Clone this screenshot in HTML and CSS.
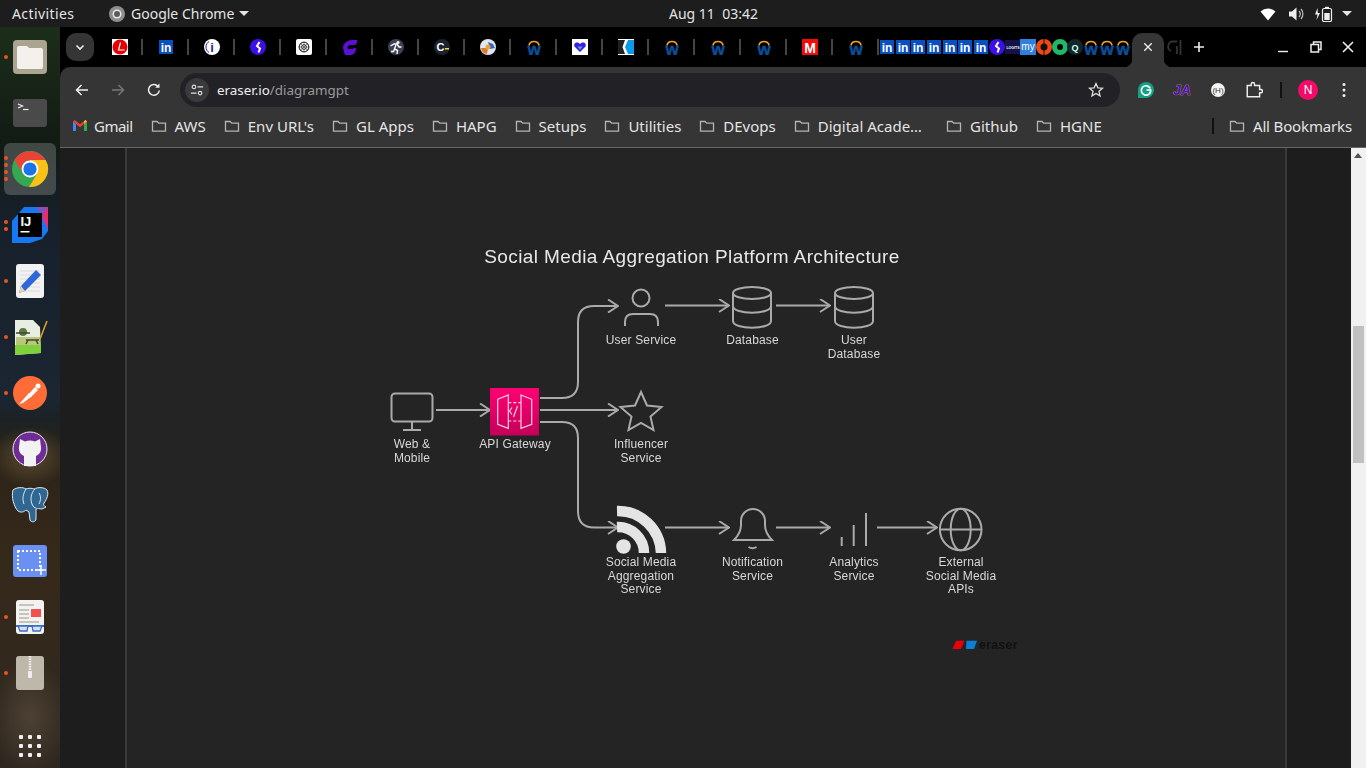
FILE: index.html
```html
<!DOCTYPE html>
<html lang="en">
<head>
    <meta charset="UTF-8">
    <meta name="viewport" content="width=device-width, initial-scale=1.0">
    <title>eraser.io/diagramgpt</title>
    <link rel="stylesheet" href="styles.css">
</head>
<body>
    <svg class="sprites">
        <symbol id="folder" viewBox="0 0 16 16"><path d="M1.5 3.5h4.6l1.6 1.6h6.8v8H1.500z" fill="none" stroke="#b4b4b4" stroke-width="1.3"/></symbol>
        <symbol id="workday" viewBox="0 0 16 16"><path d="M2.800 6.500a5.400 5.400 0 0 1 10.400 0" fill="none" stroke="#f5a623" stroke-width="1.500"/><text x="8" y="15.800" class="fav-w">w</text></symbol>
        <symbol id="linkedin" viewBox="0 0 16 16"><rect x="1" y="1" width="14" height="14" fill="#0a4fc0"/><text x="8" y="12.800" class="fav-in">in</text></symbol>
        <symbol id="kite" viewBox="0 0 16 16"><circle cx="8" cy="8" r="8" fill="#3a10e6"/><path d="M9.500 3 7 7l3 2.500-1.500 4" fill="none" stroke="#fff" stroke-width="2"/></symbol>
    </svg>

    <header class="topbar">
        <div class="top-left">
            <span class="activities">Activities</span>
            <svg class="app-icon" viewBox="0 0 16 16"><circle cx="8" cy="8" r="8" fill="#8e8e8e"/><circle cx="8" cy="8" r="4.500" fill="#e8e8e8"/><circle cx="8" cy="8" r="3" fill="#5b5b5b"/></svg>
            <span>Google Chrome</span>
            <i class="caret"></i>
        </div>
        <div class="clock">Aug 11&nbsp;&nbsp;03:42</div>
        <div class="status">
            <svg viewBox="0 0 20 16"><path d="M2.500 5.500a11 11 0 0 1 15 0L10 14.500z" fill="#fff"/></svg>
            <svg viewBox="0 0 20 16"><path d="M3 5.500h3l4.500-4v13L6 10.500H3z" fill="#eee"/><path d="M13 5a4.500 4.500 0 0 1 0 6M15 3a7.500 7.500 0 0 1 0 10" fill="none" stroke="#bbb" stroke-width="1.200"/></svg>
            <svg viewBox="0 0 20 16"><path d="M3.500 2 1 8.500h2.500L2.500 14 6 7H3.800z" fill="#eee"/><rect x="8.500" y="2.500" width="9" height="13" rx="1.500" fill="none" stroke="#eee" stroke-width="1.200"/><rect x="11" y="0.800" width="4" height="2" fill="#eee"/><rect x="10.300" y="7" width="5.400" height="7" fill="#eee"/></svg>
            <i class="caret status-caret"></i>
        </div>
    </header>

    <div class="desktop">
        <nav class="dock">
            <div class="dock-item">
                <i class="run run-one"></i>
                <svg viewBox="0 0 44 44"><rect x="5" y="5" width="34" height="34" rx="4" fill="#aaa491"/><path d="M9 13a2 2 0 0 1 2-2h8l2 2h12a2 2 0 0 1 2 2v17a2 2 0 0 1-2 2H11a2 2 0 0 1-2-2z" fill="#f4f1ec"/></svg>
            </div>
            <div class="dock-item">
                <svg viewBox="0 0 44 44"><rect x="5" y="8" width="34" height="28" rx="3" fill="#4a4a4a"/><path d="m10 13 4.500 2-4.500 2" fill="none" stroke="#eee" stroke-width="1.200"/><path d="M15 18.500h5.500" stroke="#eee" stroke-width="1.200"/></svg>
            </div>
            <div class="dock-item dock-active">
                <i class="run run-four"></i>
                <svg viewBox="0 0 44 44"><circle cx="22" cy="22" r="18" fill="#34a853"/><path d="M22 13.600h15.600A18 18 0 0 0 6.400 13l8.300 13.200A8.400 8.400 0 0 1 22 13.600z" fill="#ea4335"/><path d="M37.600 13H22v13.200l7.300 0L21 40a18 18 0 0 0 16.600-27z" fill="#fbc116"/><circle cx="22" cy="22" r="8.400" fill="#fff"/><circle cx="22" cy="22" r="6.600" fill="#1a73e8"/></svg>
            </div>
            <div class="dock-item">
                <i class="run run-two"></i>
                <svg viewBox="0 0 44 44"><path d="M16 4h24v24l-6 8-12 4H4V18z" fill="#1877f2"/><path d="M16 4h24v14L28 4z" fill="#8a4fb5"/><path d="M40 4v22l-6-12z" fill="#ee2a6b"/><rect x="10" y="10" width="24" height="24" fill="#000"/><text x="12.500" y="23" class="dock-ij">IJ</text><rect x="12.500" y="28" width="9" height="1.500" fill="#fff"/></svg>
            </div>
            <div class="dock-item">
                <i class="run run-one"></i>
                <svg viewBox="0 0 44 44"><rect x="8" y="5" width="28" height="34" rx="3" fill="#f2f2f2"/><path d="M12 12h20M12 16h20M12 20h20M12 24h20M12 28h20M12 32h20" stroke="#dcdcdc"/><path d="m28 11 5 5-16 16-6 2 2-7z" fill="#2f66d8"/><path d="m13 27 4 5-6 2z" fill="#e8d5a8"/></svg>
            </div>
            <div class="dock-item">
                <i class="run run-one"></i>
                <svg viewBox="0 0 44 44"><path d="M7 5h18l7 7 1 26-26 2z" fill="#e8eee2"/><path d="M7 30l26-1 0 9-26 2z" fill="#7fd03a"/><path d="M8 22h24v8H8z" fill="#b9c77a"/><circle cx="15" cy="17" r="4" fill="#5d7a45"/><path d="M8 18h14M18 25h13M20 25l-2 4M28 25l2 4" stroke="#3f4a2a" stroke-width="1.500"/><path d="m32 24 7-18" stroke="#d9a21b" stroke-width="1.600"/></svg>
            </div>
            <div class="dock-item">
                <i class="run run-one"></i>
                <svg viewBox="0 0 44 44"><circle cx="22" cy="22" r="17" fill="#ff6c37"/><path d="m11 33 2-2 8-9 3 3-9 7z" fill="#fff"/><path d="m19 25 8-9 3 3-8 8z" fill="#fff"/><circle cx="30" cy="15" r="2.500" fill="#fff"/></svg>
            </div>
            <div class="dock-item">
                <svg viewBox="0 0 44 44"><circle cx="22" cy="22" r="17" fill="#6e2c96" stroke="#eee" stroke-width="1"/><path d="M12 12l5 2.500a13 13 0 0 1 10 0l5-2.500.7 6c1 4 .3 9-4.700 11v10H16V29c-5-2-5.700-7-4.700-11z" fill="#f2f2f2"/></svg>
            </div>
            <div class="dock-item">
                <svg viewBox="0 0 44 44"><path d="M5 7c4-3 10-3 13-1 2-1 6-1 8 0 4-2 10-2 13 1 2 4 0 9-3 13-1 2 0 3 2 4l-4 2c-3 0-4-1-6 0v10c0 3-5 4-6 1l-1-8-3-2c-2 2-5 3-8 1C6 24 3 14 5 7z" fill="#2f6792" stroke="#dfe8ef" stroke-width="1"/><path d="M18 6c-3 5-4 10-2 15M27 6c-4 4-5 10-3 15 1 3 3 4 4 4M31 10c2 3 2 7 0 11" fill="none" stroke="#dfe8ef"/></svg>
            </div>
            <div class="dock-item">
                <svg viewBox="0 0 44 44"><rect x="5" y="6" width="34" height="32" rx="3" fill="#6a90f4"/><rect x="10" y="12" width="22" height="19" fill="none" stroke="#fff" stroke-width="2" stroke-dasharray="2 2"/><path d="M33 26v10M28 31h10" stroke="#fff" stroke-width="1.500"/></svg>
            </div>
            <div class="dock-item">
                <i class="run run-one"></i>
                <svg viewBox="0 0 44 44"><rect x="8" y="5" width="28" height="34" rx="3" fill="#f2f2f2"/><path d="M11 10h15M11 15h10M11 19h10M11 23h10M11 27h20" stroke="#b9b6a8" stroke-width="1.300"/><rect x="23" y="14" width="10" height="8" fill="#ef5350"/><rect x="8" y="30" width="28" height="2" fill="#3870c6"/><path d="M10 31h10l-1 5h-7zM24 31h10l-2 5h-7z" fill="#dde" stroke="#3870c6" stroke-width="1.300"/></svg>
            </div>
            <div class="dock-item">
                <i class="run run-one"></i>
                <svg viewBox="0 0 44 44"><rect x="8" y="5" width="28" height="34" rx="3" fill="#bdb8a9"/><path d="M22 5v16" stroke="#f2f2f2" stroke-width="2.500" stroke-dasharray="1.500 1"/><rect x="20" y="20" width="4" height="7" rx="1" fill="#eee"/></svg>
            </div>
            <div class="dock-apps">
                <i></i><i></i><i></i><i></i><i></i><i></i><i></i><i></i><i></i>
            </div>
        </nav>

        <main class="chrome">
            <div class="tabstrip">
                <button class="tab-search"><svg viewBox="0 0 12 12"><path d="m2.500 4.500 3.500 3.500 3.500-3.500" fill="none" stroke="#eee" stroke-width="1.600"/></svg></button>
                <div class="tab"><svg class="fav" viewBox="0 0 16 16"><rect width="16" height="16" fill="#fff"/><circle cx="8" cy="8" r="7.500" fill="#e60000"/><path d="M8.500 3.500 6.500 11h6" fill="none" stroke="#fff" stroke-width="1.200"/></svg></div>
                <div class="tab"><svg class="fav"><use href="#linkedin"/></svg></div>
                <div class="tab"><svg class="fav" viewBox="0 0 16 16"><circle cx="8" cy="8" r="8" fill="#fff"/><path d="M5 2.500a6.500 6.500 0 0 0 0 11" fill="none" stroke="#1a2fa0"/><text x="8" y="13" class="fav-i">i</text></svg></div>
                <div class="tab"><svg class="fav"><use href="#kite"/></svg></div>
                <div class="tab"><svg class="fav" viewBox="0 0 16 16"><rect width="16" height="16" rx="2" fill="#fff"/><circle cx="8" cy="8" r="4.800" fill="none" stroke="#333" stroke-width="1.200"/><circle cx="8" cy="8" r="2.400" fill="none" stroke="#333"/><path d="M4 4l8 8M12 4l-8 8M8 2.500v11M2.500 8h11" stroke="#333" stroke-width=".5"/></svg></div>
                <div class="tab"><svg class="fav" viewBox="0 0 16 16"><path d="M3 16 1 9c0-5 5-8 9-8h5c0 4-1 5-3 5H9C6 6 5 8 6 10h5l1-1h2c0 4-2 7-5 7z" fill="#5c0fd6"/></svg></div>
                <div class="tab"><svg class="fav" viewBox="0 0 16 16"><circle cx="8" cy="8" r="8" fill="#3c4155"/><circle cx="10" cy="3.500" r="1.500" fill="#fff"/><path d="M2.500 7 6 5h3l2 3h2.500M8 6 6.500 10l3 1.500-.5 3.500M6.500 10l-1 2.500-2.500 0" fill="none" stroke="#fff" stroke-width="1.400"/></svg></div>
                <div class="tab"><svg class="fav" viewBox="0 0 16 16"><circle cx="8" cy="8" r="8" fill="#1b2230"/><text x="2.500" y="12" class="fav-c">C</text><rect x="11" y="9" width="4" height="1.500" fill="#f2e230"/></svg></div>
                <div class="tab"><svg class="fav" viewBox="0 0 16 16"><circle cx="8" cy="8" r="8" fill="#dfe6f2"/><path d="M1 9a7 7 0 0 0 6 6l1-6z" fill="#e07a20"/><path d="M8 3l5 2 2 4-5 1z" fill="#3a66b8"/><circle cx="8" cy="8" r="2.500" fill="#e8a33c"/></svg></div>
                <div class="tab"><svg class="fav"><use href="#workday"/></svg></div>
                <div class="tab"><svg class="fav" viewBox="0 0 16 16"><rect width="16" height="16" fill="#fff"/><path d="M8 13 2.500 7.500C1.500 5.500 3 3.500 5 3.500c1.300 0 2.300.6 3 1.500.7-.9 1.700-1.500 3-1.500 2 0 3.500 2 2.500 4z" fill="#3d1ce0"/><path d="M8 11 5.500 7.500h5z" fill="#38a8f0"/></svg></div>
                <div class="tab"><svg class="fav" viewBox="0 0 16 16"><rect width="16" height="16" fill="#fff"/><path d="M0 1h7L4.500 8 7 15H0z" fill="#231f20"/><path d="M16 1h-6L7 8l3 7h6z" fill="#0a9be8"/></svg></div>
                <div class="tab"><svg class="fav"><use href="#workday"/></svg></div>
                <div class="tab"><svg class="fav"><use href="#workday"/></svg></div>
                <div class="tab"><svg class="fav"><use href="#workday"/></svg></div>
                <div class="tab"><svg class="fav" viewBox="0 0 16 16"><rect width="16" height="16" fill="#f50a0a"/><text x="8" y="14" class="fav-m">M</text></svg></div>
                <div class="tab"><svg class="fav"><use href="#workday"/></svg></div>

                <div class="tab-mini"><svg class="fav"><use href="#linkedin"/></svg></div>
                <div class="tab-mini"><svg class="fav"><use href="#linkedin"/></svg></div>
                <div class="tab-mini"><svg class="fav"><use href="#linkedin"/></svg></div>
                <div class="tab-mini"><svg class="fav"><use href="#linkedin"/></svg></div>
                <div class="tab-mini"><svg class="fav"><use href="#linkedin"/></svg></div>
                <div class="tab-mini"><svg class="fav"><use href="#linkedin"/></svg></div>
                <div class="tab-mini"><svg class="fav"><use href="#linkedin"/></svg></div>
                <div class="tab-mini"><svg class="fav"><use href="#kite"/></svg></div>
                <div class="tab-mini"><svg class="fav" viewBox="0 0 16 16"><rect y="1" width="16" height="14" fill="#15124a"/><text x="8" y="9.500" class="fav-tiny">LOGITS</text></svg></div>
                <div class="tab-mini"><svg class="fav" viewBox="0 0 16 16"><rect width="16" height="16" fill="#2f7fdc"/><text x="8" y="11" class="fav-my">my</text></svg></div>
                <div class="tab-mini"><svg class="fav" viewBox="0 0 16 16"><circle cx="8" cy="8" r="8" fill="#ef4a12"/><circle cx="8" cy="8" r="3.500" fill="#111"/><path d="M8 0v16" stroke="#111"/></svg></div>
                <div class="tab-mini"><svg class="fav" viewBox="0 0 16 16"><circle cx="8" cy="8" r="5.500" fill="none" stroke="#1fb866" stroke-width="5"/></svg></div>
                <div class="tab-mini"><svg class="fav" viewBox="0 0 16 16"><circle cx="8" cy="8" r="8" fill="#12262c"/><text x="8" y="11.500" class="fav-q">Q</text></svg></div>
                <div class="tab-mini"><svg class="fav"><use href="#workday"/></svg></div>
                <div class="tab-mini"><svg class="fav"><use href="#workday"/></svg></div>
                <div class="tab-mini"><svg class="fav"><use href="#workday"/></svg></div>

                <div class="tab-active"><svg viewBox="0 0 12 12"><path d="m1.500 1.500 9 9m0-9-9 9" stroke="#eee" stroke-width="1.600"/></svg></div>
                <div class="tab-ghost"><svg viewBox="0 0 16 16"><path d="M11 2.500H7a5 5 0 0 0-2 9.500M11 7v8M14.500 1v15" fill="none" stroke="#333" stroke-width="1.800"/></svg></div>
                <button class="new-tab"><svg viewBox="0 0 12 12"><path d="M6 1v10M1 6h10" stroke="#eee" stroke-width="1.600"/></svg></button>
                <div class="window-controls">
                    <svg viewBox="0 0 12 12"><path d="M1 10.500h10" stroke="#eee" stroke-width="1.400"/></svg>
                    <svg viewBox="0 0 12 12"><path d="M3.500 3V1h7.500v7.500H9" fill="none" stroke="#eee" stroke-width="1.500"/><rect x="1" y="3.500" width="7.500" height="7.500" fill="none" stroke="#eee" stroke-width="1.500"/></svg>
                    <svg viewBox="0 0 12 12"><path d="m1 1 10 10m0-10L1 11" stroke="#eee" stroke-width="1.600"/></svg>
                </div>
            </div>

            <div class="toolbar">
                <button class="tool"><svg viewBox="0 0 16 16"><path d="M14 8H3m4.500-5L2.500 8l5 5" fill="none" stroke="#eee" stroke-width="1.500"/></svg></button>
                <button class="tool"><svg viewBox="0 0 16 16"><path d="M2 8h11M8.500 3l5 5-5 5" fill="none" stroke="#777" stroke-width="1.500"/></svg></button>
                <button class="tool"><svg viewBox="0 0 16 16"><path d="M13.300 8.500A5.400 5.400 0 1 1 12 4.300" fill="none" stroke="#eee" stroke-width="1.500"/><path d="M13.500 1.500v4.300H9.200z" fill="#eee"/></svg></button>
                <div class="omnibox">
                    <span class="site-info"><svg viewBox="0 0 16 16"><circle cx="4.500" cy="4.500" r="2" fill="none" stroke="#ddd" stroke-width="1.300"/><path d="M8.500 4.500H15M1 11.500h6.500" stroke="#ddd" stroke-width="1.300"/><circle cx="11.500" cy="11.500" r="2" fill="none" stroke="#ddd" stroke-width="1.300"/></svg></span>
                    <span class="url">eraser.io<span class="url-path">/diagramgpt</span></span>
                    <svg class="star" viewBox="0 0 16 16"><path d="m8 1.500 1.900 4.300 4.600.4-3.500 3 1 4.600L8 11.400l-4 2.400 1-4.600-3.500-3 4.600-.4z" fill="none" stroke="#ddd" stroke-width="1.300"/></svg>
                </div>
                <button class="tool"><svg viewBox="0 0 16 16"><path d="M8 0a8 8 0 0 1 0 16H0V8a8 8 0 0 1 8-8z" fill="#15a085"/><path d="M12.300 6.500A4.700 4.700 0 1 0 12.700 8H8.500" fill="none" stroke="#fff" stroke-width="1.700"/></svg></button>
                <button class="tool"><span class="ext-ja">JA</span></button>
                <button class="tool"><svg viewBox="0 0 16 16"><circle cx="8" cy="8" r="7" fill="#f4f4f4"/><text x="8" y="11" class="ext-h">(H)</text></svg></button>
                <button class="tool"><svg class="puzzle" viewBox="0 0 16 16"><path d="M2 4h3.500V2.800a1.500 1.500 0 0 1 3 0V4H13v3.500h1a1.500 1.500 0 0 1 0 3h-1V14H2z" fill="none" stroke="#eee" stroke-width="1.300"/></svg></button>
                <span class="tool-sep"></span>
                <button class="tool"><span class="avatar">N</span></button>
                <button class="tool"><svg viewBox="0 0 16 16"><circle cx="8" cy="2.500" r="1.500" fill="#eee"/><circle cx="8" cy="8" r="1.500" fill="#eee"/><circle cx="8" cy="13.500" r="1.500" fill="#eee"/></svg></button>
            </div>

            <div class="bookmarks">
                <span class="bookmark bookmark-gmail">
                    <svg viewBox="0 0 14 16"><path d="M0 3.500V13h3V6z" fill="#4285f4"/><path d="M14 3.500V13h-3V6z" fill="#34a853"/><path d="M0 3.500 1.500 2 7 6.300 12.500 2 14 3.500 11 6 7 9.300 3 6z" fill="#ea4335"/><path d="M11 6l3-2.500L12.500 2 11 3.200z" fill="#fbbc04"/></svg>
                    Gmail
                </span>
                <span class="bookmark"><svg><use href="#folder"/></svg>AWS</span>
                <span class="bookmark"><svg><use href="#folder"/></svg>Env URL's</span>
                <span class="bookmark"><svg><use href="#folder"/></svg>GL Apps</span>
                <span class="bookmark"><svg><use href="#folder"/></svg>HAPG</span>
                <span class="bookmark"><svg><use href="#folder"/></svg>Setups</span>
                <span class="bookmark"><svg><use href="#folder"/></svg>Utilities</span>
                <span class="bookmark"><svg><use href="#folder"/></svg>DEvops</span>
                <span class="bookmark bookmark-long"><svg><use href="#folder"/></svg>Digital Acade…</span>
                <span class="bookmark"><svg><use href="#folder"/></svg>Github</span>
                <span class="bookmark"><svg><use href="#folder"/></svg>HGNE</span>
                <span class="bookmark-sep"></span>
                <span class="bookmark"><svg><use href="#folder"/></svg>All Bookmarks</span>
            </div>

            <div class="viewport">
                <div class="page-panel">
                    <svg class="diagram" viewBox="127 148 1158 620">
                        <defs>
                            <linearGradient id="gateway" x1="0" y1="0" x2="0" y2="1">
                                <stop offset="0" stop-color="#ff0073"/>
                                <stop offset="1" stop-color="#c4005a"/>
                            </linearGradient>
                            <marker id="head" viewBox="0 0 12 14" refX="11" refY="7" markerWidth="12" markerHeight="14" markerUnits="userSpaceOnUse" orient="auto">
                                <path d="M1 .5 11 7 1 13.500" fill="none" stroke="#aaa" stroke-width="2"/>
                            </marker>
                        </defs>

                        <text x="692" y="263" class="title">Social Media Aggregation Platform Architecture</text>

                        <!-- links -->
                        <g class="link">
                            <path d="M436 410H490" marker-end="url(#head)"/>
                            <path d="M540 398H562Q578 398 578 382V322Q578 306 594 306H618" marker-end="url(#head)"/>
                            <path d="M540 410H618" marker-end="url(#head)"/>
                            <path d="M540 422H562Q578 422 578 438V511Q578 527.500 594 527.500H618" marker-end="url(#head)"/>
                            <path d="M665 305.500H729" marker-end="url(#head)"/>
                            <path d="M776 305.500H830" marker-end="url(#head)"/>
                            <path d="M665 527.500H729" marker-end="url(#head)"/>
                            <path d="M776 527.500H830" marker-end="url(#head)"/>
                            <path d="M877 527.500H937" marker-end="url(#head)"/>
                        </g>

                        <!-- web & mobile -->
                        <g class="shape">
                            <rect x="391.500" y="393.500" width="41" height="28" rx="3.500"/>
                            <path d="M412 422v8M403 430h18"/>
                        </g>
                        <text class="label" x="412" y="448">Web &amp;</text>
                        <text class="label" x="412" y="461.500">Mobile</text>

                        <!-- api gateway -->
                        <rect x="490" y="388" width="49" height="47.500" fill="url(#gateway)"/>
                        <g class="gateway-icon">
                            <path d="M497.700 399.300 508.300 395V428.300L497.700 424.300z"/>
                            <path d="M521 395 531.700 399.300V424.300L521 428.300z"/>
                            <path d="M508.300 402.700H521M508.300 421H521" stroke-dasharray="3 2"/>
                            <path d="M512 407.500 509.500 411 512 414.500M517.500 406 513.500 417"/>
                        </g>
                        <text class="label" x="515" y="448">API Gateway</text>

                        <!-- user service -->
                        <g class="shape">
                            <circle cx="641" cy="298" r="8.500"/>
                            <path d="M625 326V322Q625 314 633 314H650Q658 314 658 322V326"/>
                        </g>
                        <text class="label" x="641" y="344">User Service</text>

                        <!-- databases -->
                        <g class="shape">
                            <ellipse cx="752" cy="293" rx="19" ry="6"/>
                            <path d="M733 293V321C733 330 771 330 771 321V293M733 306C733 315 771 315 771 306"/>
                            <ellipse cx="854" cy="293" rx="19" ry="6"/>
                            <path d="M835 293V321C835 330 873 330 873 321V293M835 306C835 315 873 315 873 306"/>
                        </g>
                        <text class="label" x="752.500" y="344">Database</text>
                        <text class="label" x="854" y="344">User</text>
                        <text class="label" x="854" y="357.500">Database</text>

                        <!-- influencer -->
                        <path class="shape" d="M641 392 647 405.500 661.500 407 650.500 416.500 653.500 430 641 423 628.500 430 631.500 416.500 620.500 407 635 405.500z"/>
                        <text class="label" x="641" y="448">Influencer</text>
                        <text class="label" x="641" y="461.500">Service</text>

                        <!-- aggregation -->
                        <circle cx="623.500" cy="546.500" r="7.300" fill="#e4e4e4"/>
                        <path class="rss" d="M617 527A26 26 0 0 1 644 553"/>
                        <path class="rss" d="M617 511A43 43 0 0 1 661 553"/>
                        <text class="label" x="641" y="566">Social Media</text>
                        <text class="label" x="641" y="579.500">Aggregation</text>
                        <text class="label" x="641" y="593">Service</text>

                        <!-- notification -->
                        <g class="shape">
                            <path d="M734 540Q741 533 741 525V521A12 12 0 0 1 765 521V525Q765 533 772 540z"/>
                            <path d="M748.500 547Q752.500 549.500 756.500 547"/>
                        </g>
                        <text class="label" x="752.500" y="566">Notification</text>
                        <text class="label" x="752.500" y="579.500">Service</text>

                        <!-- analytics -->
                        <path class="shape" d="M841.700 537V546M853.700 525V546M866 513V546"/>
                        <text class="label" x="854" y="566">Analytics</text>
                        <text class="label" x="854" y="579.500">Service</text>

                        <!-- external apis -->
                        <g class="shape">
                            <circle cx="960.700" cy="529.500" r="20.800"/>
                            <ellipse cx="960.700" cy="529.500" rx="10" ry="20.800"/>
                            <path d="M940 529.500H981.500"/>
                        </g>
                        <text class="label" x="961" y="566">External</text>
                        <text class="label" x="961" y="579.500">Social Media</text>
                        <text class="label" x="961" y="593">APIs</text>

                        <!-- watermark -->
                        <path d="M956 640.700H964.500L961 649H952.500z" fill="#e8000b"/>
                        <path d="M966.500 640.700H977L974 649H966z" fill="#0b7fd6"/>
                        <text class="watermark" x="979" y="648.500">eraser</text>
                    </svg>
                </div>
                <div class="scrollbar">
                    <i class="scroll-up"></i>
                    <i class="scroll-thumb"></i>
                </div>
            </div>
        </main>
    </div>
</body>
</html>
```

FILE: styles.css
```css
* {
    box-sizing: border-box;
}
body {
    margin: 0;
    height: 768px;
    overflow: hidden;
    background-color: #1d1d1d;
    font-family: 'Noto Sans', sans-serif;
    font-size: 14px;
    color: #e4e4e4;
}
button {
    padding: 0;
    border: none;
    background: none;
}
.sprites {
    display: none;
}

/* gnome top bar */
.topbar {
    display: flex;
    align-items: center;
    height: 27px;
    background-color: #1d1d1d;
}
.top-left {
    display: flex;
    align-items: center;
    width: 669px;
    padding-left: 12px;
}
.activities {
    width: 97px;
    letter-spacing: 0.4px;
}
.app-icon {
    width: 16px;
    height: 16px;
    margin-right: 6px;
}
.caret {
    display: block;
    width: 0;
    height: 0;
    margin-left: 5px;
    border-left: 5px solid transparent;
    border-right: 5px solid transparent;
    border-top: 5px solid #e4e4e4;
}
.status {
    display: flex;
    align-items: center;
    gap: 8px;
    margin-left: auto;
    padding-right: 14px;
}
.status svg {
    width: 20px;
    height: 16px;
}
.status-caret {
    margin-left: 0;
}

.desktop {
    display: flex;
    height: 741px;
}

/* dock */
.dock {
    display: flex;
    flex-direction: column;
    flex: none;
    width: 60px;
    padding-top: 2px;
    background:
        radial-gradient(ellipse 40px 30px at 30px 430px, #5a4a30 0%, transparent 100%),
        radial-gradient(ellipse 40px 60px at 30px 690px, #4d4134 0%, transparent 100%),
        linear-gradient(180deg, #1c2e1a 0%, #121a14 16%, #17202a 26%, #1a2632 50%, #1c2224 53%, #2c2318 58%, #35291a 72%, #2e271f 100%);
}
.dock-item {
    position: relative;
    display: flex;
    align-items: center;
    justify-content: center;
    flex: none;
    height: 56px;
}
.dock-item svg {
    width: 44px;
    height: 44px;
}
.dock-ij {
    font-family: 'Liberation Sans', sans-serif;
    font-size: 13px;
    font-weight: bold;
    fill: #fff;
}
.dock-active::before {
    content: "";
    position: absolute;
    top: 2px;
    left: 4px;
    width: 52px;
    height: 52px;
    border-radius: 6px;
    background-color: rgba(255, 255, 255, 0.2);
}
.dock-active svg {
    position: relative;
}
.run {
    position: absolute;
    left: 4px;
    top: 26px;
    width: 4px;
    height: 4px;
    border-radius: 50%;
    background-color: #e95420;
    color: #e95420;
}
.run-two {
    top: 22.500px;
    box-shadow: 0 7px 0 currentColor;
}
.run-four {
    top: 15px;
    box-shadow: 0 7px 0 currentColor, 0 14px 0 currentColor, 0 21px 0 currentColor;
}
.dock-apps {
    display: grid;
    grid-template-columns: repeat(3, 4px);
    gap: 5px;
    margin: 34px 0 0 19px;
}
.dock-apps i {
    height: 4px;
    border-radius: 1px;
    background-color: #f2f2f2;
}

/* chrome window */
.chrome {
    display: flex;
    flex-direction: column;
    flex: 1;
    min-width: 0;
    background-color: #000;
}
.tabstrip {
    display: flex;
    align-items: center;
    flex: none;
    height: 40px;
    padding-left: 6px;
    background-color: #000;
}
.tab-search {
    display: flex;
    align-items: center;
    justify-content: center;
    flex: none;
    width: 28px;
    height: 28px;
    margin-right: 3px;
    border-radius: 10px;
    background-color: #353535;
}
.tab-search svg {
    width: 12px;
    height: 12px;
}
.tab {
    display: flex;
    align-items: center;
    justify-content: center;
    flex: none;
    width: 46px;
    height: 16px;
    border-right: 2px solid #444;
    padding-left: 2px;
}
.tab-mini {
    display: flex;
    align-items: center;
    justify-content: center;
    flex: none;
    width: 15.730px;
    height: 16px;
}
.tab-mini .fav {
    flex: none;
}
.fav {
    width: 16px;
    height: 16px;
}
.fav-in, .fav-w, .fav-m, .fav-i, .fav-my, .fav-q, .fav-tiny {
    font-family: 'Liberation Sans', sans-serif;
    font-weight: bold;
    text-anchor: middle;
}
.fav-in {
    font-size: 12px;
    fill: #fff;
}
.fav-w {
    font-size: 17px;
    fill: #07509c;
    stroke: #07509c;
    stroke-width: 0.4px;
}
.fav-m {
    font-size: 14px;
    fill: #fff;
}
.fav-i {
    font-size: 13px;
    fill: #1a2fa0;
}
.fav-c {
    font-family: 'Liberation Sans', sans-serif;
    font-weight: bold;
    font-size: 11px;
    fill: #fff;
}
.fav-my {
    font-size: 10px;
    font-weight: normal;
    fill: #fff;
}
.fav-q {
    font-size: 9px;
    fill: #cfe;
}
.fav-tiny {
    font-size: 3.500px;
    fill: #fff;
}
.tab-active {
    position: relative;
    display: flex;
    align-items: center;
    justify-content: center;
    flex: none;
    align-self: flex-end;
    width: 32px;
    height: 34px;
    margin-left: 1.300px;
    border-radius: 10px 10px 0 0;
    background-color: #353535;
}
.tab-active svg {
    width: 10px;
    height: 10px;
    margin-bottom: 6px;
}
.tab-active::before, .tab-active::after {
    content: "";
    position: absolute;
    bottom: 0;
    width: 8px;
    height: 8px;
}
.tab-active::before {
    left: -8px;
    background: radial-gradient(circle at 0 0, #000 8px, #353535 8.500px);
}
.tab-active::after {
    right: -8px;
    background: radial-gradient(circle at 100% 0, #000 8px, #353535 8.500px);
}
.tab-ghost {
    flex: none;
    width: 16px;
    height: 16px;
    margin-left: 2px;
}
.new-tab {
    display: flex;
    flex: none;
    width: 12px;
    height: 12px;
    margin-left: 11px;
}
.window-controls {
    display: flex;
    align-items: center;
    gap: 20.500px;
    margin-left: auto;
    padding-right: 12px;
}
.window-controls svg {
    width: 12px;
    height: 12px;
}

/* toolbar */
.toolbar {
    display: flex;
    flex: none;
    height: 40px;
    padding: 6px 0 0 4px;
    border-radius: 10px 0 0 0;
    background-color: #353535;
}
.tool {
    display: flex;
    align-items: center;
    justify-content: center;
    flex: none;
    width: 36px;
    height: 34px;
}
.tool svg {
    width: 16px;
    height: 16px;
}
.tool .puzzle {
    width: 18px;
    height: 18px;
}
.omnibox {
    display: flex;
    align-items: center;
    flex: none;
    width: 940px;
    height: 34px;
    margin: 0 8px;
    padding: 0 16px 0 5px;
    border-radius: 17px;
    background-color: #222226;
}
.site-info {
    display: flex;
    align-items: center;
    justify-content: center;
    width: 24px;
    height: 24px;
    border-radius: 50%;
    background-color: #3a3a3c;
}
.site-info svg {
    width: 14px;
    height: 14px;
}
.url {
    margin-left: 8px;
    font-size: 13.400px;
    color: #eee;
}
.url-path {
    color: #9a9a9a;
}
.star {
    width: 16px;
    height: 16px;
    margin-left: auto;
}
.ext-ja {
    font-family: 'Liberation Sans', sans-serif;
    font-size: 14px;
    font-weight: bold;
    font-style: italic;
    color: #4a14d0;
    -webkit-text-stroke: 0.6px #e0a818;
    paint-order: stroke fill;
}
.ext-h {
    font-family: 'Liberation Sans', sans-serif;
    font-size: 8px;
    text-anchor: middle;
    fill: #333;
}
.tool-sep {
    flex: none;
    width: 2px;
    height: 16px;
    margin: 9px 8px 0;
    background-color: #111;
}
.avatar {
    display: block;
    width: 20px;
    height: 20px;
    border-radius: 50%;
    background-color: #f50a6a;
    font-size: 12px;
    line-height: 20px;
    text-align: center;
    color: #fff;
}

/* bookmarks */
.bookmarks {
    display: flex;
    align-items: center;
    gap: 18px;
    flex: none;
    height: 41px;
    padding: 0 0 2px 13px;
    border-bottom: 1px solid #666;
    background-color: #353535;
    font-size: 15px;
}
.bookmark {
    display: flex;
    align-items: center;
    gap: 8px;
    flex: none;
    white-space: nowrap;
}
.bookmark svg {
    width: 16px;
    height: 16px;
}
.bookmark-gmail {
    gap: 7px;
    letter-spacing: -0.5px;
}
.bookmark-gmail svg {
    width: 14px;
}
.bookmark-long {
    margin-right: 6px;
}
.bookmark-sep {
    flex: none;
    width: 2px;
    height: 16px;
    margin: 0 -3px 0 auto;
    background-color: #111;
}
.bookmark:last-child {
    margin-right: 14px;
    letter-spacing: -0.15px;
}

/* page */
.viewport {
    display: flex;
    flex: 1;
    min-height: 0;
    background-color: #1d1d1d;
}
.page-panel {
    flex: none;
    width: 1162px;
    margin-left: 65px;
    border-left: 2px solid #3a3a3a;
    border-right: 2px solid #3a3a3a;
    background-color: #242424;
}
.diagram {
    display: block;
    width: 1158px;
    height: 620px;
    filter: blur(0.35px);
    font-family: 'Liberation Sans', sans-serif;
}
.title {
    font-size: 19px;
    letter-spacing: 0.4px;
    text-anchor: middle;
    fill: #e8e8e8;
}
.label {
    font-size: 12px;
    letter-spacing: 0.15px;
    text-anchor: middle;
    fill: #d8d8d8;
}
.link path {
    fill: none;
    stroke: #aaa;
    stroke-width: 2;
}
.shape, .shape * {
    fill: none;
    stroke: #aaa;
    stroke-width: 2;
}
.gateway-icon path {
    fill: none;
    stroke: #ffd0e2;
    stroke-width: 1.200;
}
.rss {
    fill: none;
    stroke: #e4e4e4;
    stroke-width: 10.500;
}
.watermark {
    font-size: 12.500px;
    font-weight: bold;
    letter-spacing: 0.2px;
    fill: #111;
}
.scrollbar {
    position: relative;
    flex: none;
    width: 15px;
    margin-left: auto;
    background-color: #f1f1f1;
}
.scroll-up {
    position: absolute;
    top: 5px;
    left: 3px;
    width: 0;
    height: 0;
    border-left: 4px solid transparent;
    border-right: 4px solid transparent;
    border-bottom: 5px solid #505050;
}
.scroll-thumb {
    position: absolute;
    top: 178px;
    left: 2px;
    width: 11px;
    height: 137px;
    background-color: #c1c1c1;
}
```
